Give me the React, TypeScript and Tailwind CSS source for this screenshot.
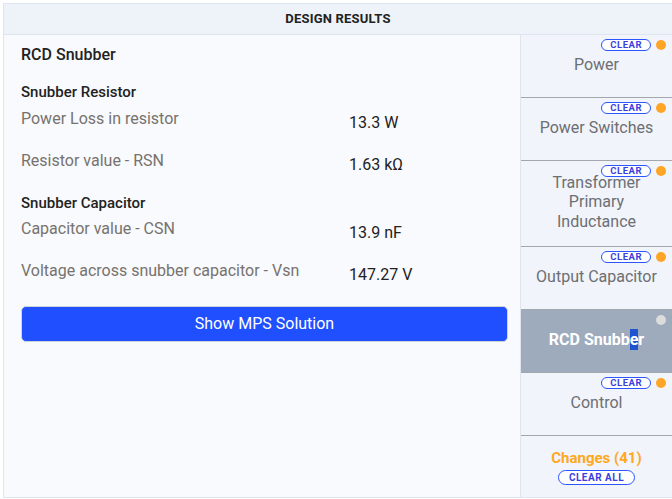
import React from "react";

const font = { fontFamily: "Roboto, 'Liberation Sans', sans-serif" };

function Badge({ label = "CLEAR" }: { label?: string }) {
  return (
    <span className="inline-flex items-center justify-center h-[12px] px-[8px] rounded-full border border-[#2a55ff] text-[9.5px] font-bold leading-none tracking-[0.5px] text-[#3b3fe0] bg-white">
      {label}
    </span>
  );
}

function NavItem({
  label,
  active = false,
  tall = false,
}: {
  label: React.ReactNode;
  active?: boolean;
  tall?: boolean;
}) {
  return (
    <div
      className={`relative flex items-center justify-center pt-[10px] pb-[13px] px-[12px] border-b border-[#a3a6aa] text-center ${
        active ? "bg-[#9eabbd]" : ""
      } ${tall ? "min-h-[86px]" : "min-h-[63px]"}`}
    >
      {!active && (
        <div className="absolute top-[4px] right-[6px] flex items-center gap-[5px]">
          <Badge />
          <span className="w-[10px] h-[10px] rounded-full bg-[#ffa526]" />
        </div>
      )}
      {active && (
        <span className="absolute top-[5px] right-[6px] w-[10px] h-[10px] rounded-full bg-[#dcdcdc]" />
      )}
      <span
        className={`text-[16px] leading-[19.5px] ${
          active ? "text-white font-bold" : "text-[#6c6f73]"
        }`}
      >
        {label}
      </span>
    </div>
  );
}

function Row({ label, value }: { label: string; value: string }) {
  return (
    <div className="grid grid-cols-[328px_1fr] h-[42px]">
      <div className="text-[16px] text-[#77726e] leading-[20px]">{label}</div>
      <div className="text-[16px] text-[#222] leading-[20px] pt-[4px]">{value}</div>
    </div>
  );
}

export default function App() {
  return (
    <div className="w-[672px] h-[499px] bg-white pt-[3px] pl-[3px]" style={font}>
      <div className="h-[495px] border-t border-l border-b border-[#dfe5ee] flex flex-col">
        <div className="h-[31px] shrink-0 bg-[#eef2f9] border-b border-[#dfe5ee] flex items-center justify-center text-[13px] font-bold text-[#222] tracking-[0.2px]">
          DESIGN RESULTS
        </div>
        <div className="flex flex-1 min-h-0">
          <div className="flex-1 bg-[#f8fafd] pl-[17px] pr-[12px] pt-[10px]">
            <div className="text-[16px] font-medium text-[#222] leading-[20px]">RCD Snubber</div>
            <div className="mt-[17px] text-[15px] font-medium text-[#222] leading-[20px]">
              Snubber Resistor
            </div>
            <div className="mt-[7px]">
              <Row label="Power Loss in resistor" value="13.3 W" />
              <Row label="Resistor value - RSN" value="1.63 kΩ" />
            </div>
            <div className="text-[15px] font-medium text-[#222] leading-[20px]">
              Snubber Capacitor
            </div>
            <div className="mt-[6px]">
              <Row label="Capacitor value - CSN" value="13.9 nF" />
              <Row label="Voltage across snubber capacitor - Vsn" value="147.27 V" />
            </div>
            <button className="mt-[3px] w-full h-[36px] rounded-[5px] bg-[#1f4fff] border border-[#cfd3da] text-white text-[16px] leading-none">
              Show MPS Solution
            </button>
          </div>
          <div className="w-[152px] shrink-0 bg-[#f1f4fa] border-l border-[#dfe5ee] flex flex-col">
            <NavItem label="Power" />
            <NavItem label="Power Switches" />
            <NavItem label={<>Transformer Primary Inductance</>} tall />
            <NavItem label="Output Capacitor" />
            <NavItem
              label={
                <>
                  RCD Snubb<span className="bg-[#2152d0] py-[1px]">e</span>r
                </>
              }
              active
            />
            <NavItem label="Control" />
            <div className="flex flex-col items-center pt-[12px] gap-[2px]">
              <span className="text-[15px] font-bold text-[#ffa81f] leading-[20px]">Changes (41)</span>
              <span className="inline-flex items-center justify-center h-[15px] px-[10px] rounded-full border border-[#2a55ff] text-[10px] font-bold leading-none tracking-[0.5px] text-[#3b3fe0] bg-white">
                CLEAR ALL
              </span>
            </div>
          </div>
        </div>
      </div>
    </div>
  );
}
